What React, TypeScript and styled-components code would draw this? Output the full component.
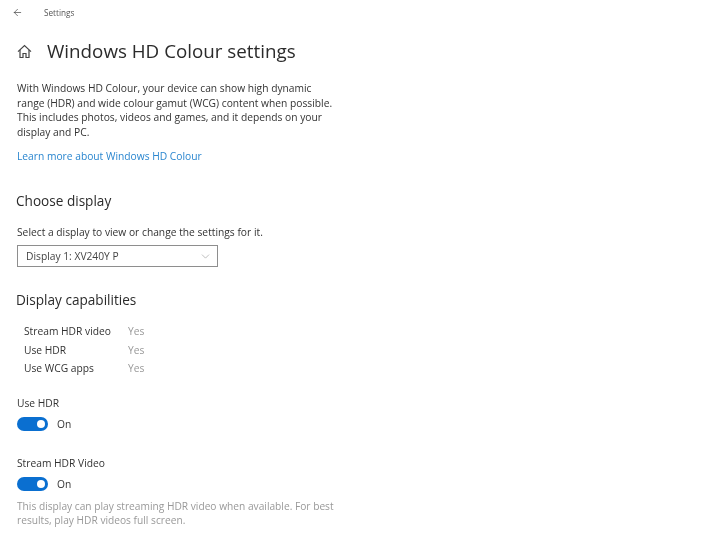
import styled, { createGlobalStyle } from "styled-components";
import { ArrowLeft, ChevronDown } from "lucide-react";

const GlobalStyle = createGlobalStyle`
  * {
    box-sizing: border-box;
  }
  html, body {
    margin: 0;
    background: #fff;
    overflow: hidden;
  }
`;

const Page = styled.div`
  width: 720px;
  height: 538px;
  padding: 0 0 0 17px;
  font-family: "Open Sans", "Noto Sans", sans-serif;
  font-size: 10.25px;
  color: #333;
  overflow: hidden;
  filter: blur(0.55px);
`;

const TitleBar = styled.div`
  display: flex;
  align-items: center;
  height: 24px;
  margin-left: -5px;
  color: #333;
`;

const BarTitle = styled.span`
  margin-left: 21px;
  font-size: 8.2px;
  color: #555;
`;

const Heading = styled.div`
  display: flex;
  align-items: center;
  height: 30px;
  margin-top: 12px;
  gap: 15px;
  color: #444;
`;

const PageTitle = styled.h1`
  margin: 0;
  font-size: 18.8px;
  font-weight: 400;
  color: #2b2b2b;
`;

const Intro = styled.p`
  width: 325px;
  margin: 15px 0 0;
  line-height: 14.5px;
`;

const LearnMore = styled.a`
  display: block;
  margin-top: 10px;
  line-height: 14px;
  color: #2a86cf;
`;

const SectionTitle = styled.h2<{ $top: number }>`
  margin: ${(p) => p.$top}px 0 0 -1px;
  font-size: 13.6px;
  line-height: 20px;
  font-weight: 400;
  color: #2b2b2b;
`;

const Hint = styled.div`
  margin-top: 14px;
  line-height: 14px;
`;

const Select = styled.div`
  display: flex;
  align-items: center;
  justify-content: space-between;
  width: 201px;
  height: 22px;
  margin-top: 6px;
  padding: 0 5px 0 8px;
  border: 1.5px solid #8e8e8e;
  color: #444;
`;

const Capabilities = styled.div`
  display: grid;
  grid-template-columns: 104px auto;
  grid-auto-rows: 18.5px;
  align-items: center;
  justify-content: start;
  margin: 12px 0 0 7px;
`;

const CapabilityValue = styled.span`
  color: #999;
`;

const Setting = styled.div<{ $top: number }>`
  margin-top: ${(p) => p.$top}px;
`;

const SettingLabel = styled.div`
  line-height: 14px;
`;

const SwitchRow = styled.div`
  display: flex;
  align-items: center;
  gap: 9px;
  margin-top: 7px;
`;

const Track = styled.span`
  display: flex;
  align-items: center;
  justify-content: flex-end;
  width: 31px;
  height: 14px;
  padding-right: 3px;
  border-radius: 7px;
  background: #0a6fd0;
`;

const Knob = styled.span`
  width: 8px;
  height: 8px;
  border-radius: 50%;
  background: #fff;
`;

const Note = styled.p`
  width: 325px;
  margin: 8px 0 0;
  line-height: 14.5px;
  font-size: 10.2px;
  color: #999;
`;

function HomeIcon() {
  return (
    <svg width="15" height="15" viewBox="0 0 15 15" fill="none" stroke="currentColor" strokeWidth="1.2">
      <path d="M1 7.6 7.5 1.6 14 7.6" />
      <path d="M3 6v7.5h3V9.5h3v4h3V6" />
    </svg>
  );
}

function Toggle() {
  return (
    <SwitchRow>
      <Track>
        <Knob />
      </Track>
      <span>On</span>
    </SwitchRow>
  );
}

export default function App() {
  return (
    <Page>
      <GlobalStyle />
      <TitleBar>
        <ArrowLeft size={11} strokeWidth={1.4} />
        <BarTitle>Settings</BarTitle>
      </TitleBar>
      <Heading>
        <HomeIcon />
        <PageTitle>Windows HD Colour settings</PageTitle>
      </Heading>
      <Intro>
        With Windows HD Colour, your device can show high dynamic
        <br />
        range (HDR) and wide colour gamut (WCG) content when possible.
        <br />
        This includes photos, videos and games, and it depends on your
        <br />
        display and PC.
      </Intro>
      <LearnMore>Learn more about Windows HD Colour</LearnMore>
      <SectionTitle $top={28}>Choose display</SectionTitle>
      <Hint>Select a display to view or change the settings for it.</Hint>
      <Select>
        <span>Display 1: XV240Y P</span>
        <ChevronDown size={13} strokeWidth={1} color="#888" />
      </Select>
      <SectionTitle $top={23}>Display capabilities</SectionTitle>
      <Capabilities>
        <span>Stream HDR video</span>
        <CapabilityValue>Yes</CapabilityValue>
        <span>Use HDR</span>
        <CapabilityValue>Yes</CapabilityValue>
        <span>Use WCG apps</span>
        <CapabilityValue>Yes</CapabilityValue>
      </Capabilities>
      <Setting $top={18}>
        <SettingLabel>Use HDR</SettingLabel>
        <Toggle />
      </Setting>
      <Setting $top={25}>
        <SettingLabel>Stream HDR Video</SettingLabel>
        <Toggle />
        <Note>
          This display can play streaming HDR video when available. For best
          <br />
          results, play HDR videos full screen.
        </Note>
      </Setting>
    </Page>
  );
}
